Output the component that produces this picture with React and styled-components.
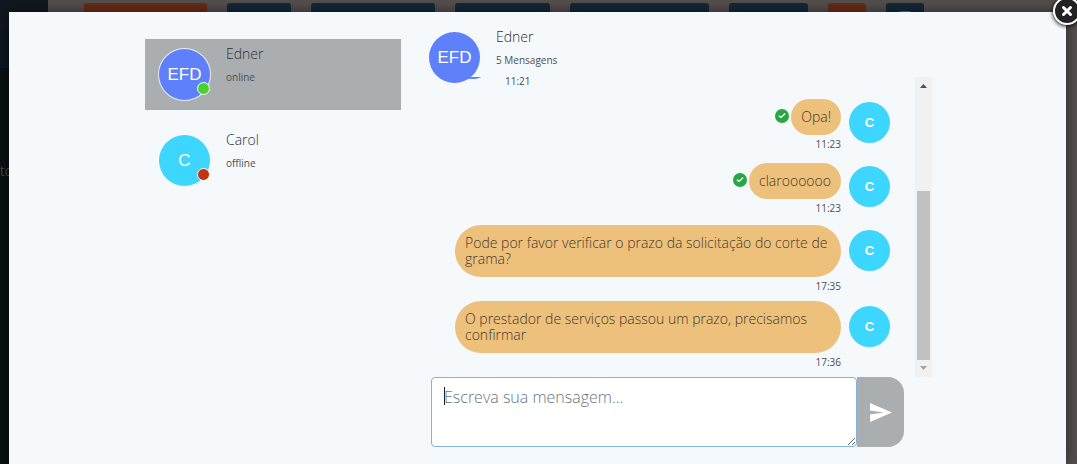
import React from 'react'
import styled, { createGlobalStyle } from 'styled-components'

const GlobalStyle = createGlobalStyle`
  * {
    box-sizing: border-box;
  }

  body {
    margin: 0;
    font-family: "Open Sans", "Noto Sans", sans-serif;
    font-weight: 300;
    color: #2b3035;
  }

  button, textarea {
    font: inherit;
  }
`;

const Page = styled.div`
  position: relative;
  display: flex;
  height: 100vh;
  overflow: hidden;
  background-color: #544e4d;
`;

const Sidebar = styled.aside`
  width: 48px;
  background: linear-gradient(#11181f 28px, #0c1720 28px, #0c1720 68px, #0a1013 68px);
  color: #6a5c5e;
  font-size: 14px;
  line-height: 20px;
  padding-top: 161px;
`;

const Toolbar = styled.div`
  flex: 1;
  display: flex;
  align-items: flex-start;
  gap: 20px;
  padding: 3px 36px;
`;

const ToolButton = styled.button`
  display: flex;
  justify-content: center;
  width: ${props => props.$width}px;
  height: 34px;
  padding: 7px 0;
  border: none;
  border-radius: 3px;
  background-color: ${props => props.$orange ? '#672d17' : '#13283a'};
  color: #5d6468;
`;

const Modal = styled.div`
  position: absolute;
  top: 12px;
  right: 11px;
  bottom: 0;
  left: 9px;
  padding: 14px 20px 0 22px;
  background-color: #f5f9fc;
  box-shadow: 0 0 12px rgba(0, 0, 0, 0.5);
`;

const Close = styled.button`
  position: absolute;
  top: -15px;
  right: -15px;
  width: 28px;
  height: 28px;
  padding: 0;
  border: 2px solid #fff;
  border-radius: 50%;
  background-color: #222;
  box-shadow: 0 1px 4px #000;
  display: flex;
  align-items: center;
  justify-content: center;
`;

const Content = styled.div`
  display: grid;
  grid-template-columns: 256px 1fr;
  gap: 28px;
  max-width: 787px;
  margin: 0 auto;
`;

const Contacts = styled.ul`
  list-style: none;
  margin: 0;
  padding: 13px 0 0;
  display: flex;
  flex-direction: column;
  gap: 15px;
`;

const Contact = styled.li`
  display: flex;
  gap: 16px;
  height: 71px;
  padding: 4px 14px;
  background-color: ${props => props.$active ? '#aaaeb0' : 'transparent'};
`;

const Avatar = styled.div`
  position: relative;
  flex: none;
  display: flex;
  align-items: center;
  justify-content: center;
  width: ${props => props.$small ? 41 : 51}px;
  height: ${props => props.$small ? 41 : 51}px;
  margin-top: ${props => props.$small ? 5 : 6}px;
  border-radius: 50%;
  background-color: ${props => props.$blue ? '#5e80fb' : '#3dd6ff'};
  box-shadow: 0 0 0 1px ${props => props.$ring ? '#e8edfa' : 'transparent'};
  color: #fff;
  font-family: "Liberation Sans", Arial, sans-serif;
  font-size: ${props => props.$small ? 13 : 17}px;
  font-weight: ${props => props.$small ? 700 : 400};
`;

const Status = styled.span`
  position: absolute;
  right: 0;
  bottom: 5px;
  width: 13px;
  height: 13px;
  border: 1px solid #fff;
  border-radius: 50%;
  background-color: ${props => props.$online ? '#4ccf33' : '#bf3413'};
`;

const Name = styled.div`
  font-size: 14px;
  line-height: 22px;
`;

const Detail = styled.div`
  color: #4a4f54;
  font-size: 10px;
  line-height: 24px;
  font-weight: 400;
`;

const Header = styled.header`
  position: relative;
  z-index: 1;
  display: flex;
  gap: 16px;
  height: 51px;
`;

const History = styled.div`
  display: flex;
  height: 300px;
`;

const Messages = styled.div`
  flex: 1;
  display: flex;
  flex-direction: column;
  justify-content: flex-end;
  overflow: hidden;
  padding: 0 25px 0 23px;
`;

const Message = styled.div`
  display: flex;
  flex: none;
  flex-direction: ${props => props.$mine ? 'row' : 'row-reverse'};
  justify-content: flex-end;
  gap: 8px;
  min-height: 64px;
  padding-bottom: 6px;
`;

const Body = styled.div`
  max-width: 386px;
`;

const Line = styled.div`
  display: flex;
  align-items: flex-end;
  justify-content: flex-end;
  gap: 2px;
  min-height: 38px;
`;

const Bubble = styled.p`
  margin: 0;
  padding: 10px;
  border-radius: 26px;
  background-color: #edc17c;
  color: #46382a;
  font-size: 14px;
  line-height: 16px;
`;

const Check = styled.svg`
  flex: none;
  width: 14px;
  height: 14px;
  margin-bottom: 12px;
`;

const Time = styled.div`
  padding: ${props => props.$mine ? '0' : '1px 4px 0'};
  color: #4a4f54;
  font-size: 10px;
  line-height: 18px;
  font-weight: 400;
  text-align: right;
`;

const Scrollbar = styled.div`
  display: flex;
  flex-direction: column;
  align-items: center;
  justify-content: space-between;
  width: 17px;
  padding: 7px 2px;
  background-color: #f1f1f1;
`;

const Arrow = styled.svg`
  width: 7px;
  height: 4px;
`;

const Thumb = styled.div`
  width: 13px;
  height: 169px;
  margin: auto 0 6px;
  background-color: #c1c1c1;
`;

const Composer = styled.form`
  position: relative;
  display: flex;
  height: 70px;
  margin: 0 28px 0 2px;

  &::before {
    content: "";
    position: absolute;
    top: 10px;
    left: 13px;
    width: 1px;
    height: 18px;
    background-color: #222;
  }
`;

const Input = styled.textarea`
  flex: 1;
  min-width: 0;
  padding: 7px 12px;
  border: 1px solid #80b4dc;
  border-radius: 4px;
  outline: none;
  background-color: #fff;
  caret-color: transparent;
  font-size: 16px;
  line-height: 24px;
  resize: both;

  &::placeholder {
    color: #6c757d;
    opacity: 1;
  }
`;

const Send = styled.button`
  display: flex;
  align-items: center;
  justify-content: center;
  width: 47px;
  padding: 0;
  border: none;
  border-radius: 0 16px 16px 0;
  background-color: #aaaeb0;
`;

const tools = [
  { width: 123, orange: true },
  { width: 64 },
  { width: 124 },
  { width: 95 },
  { width: 139 },
  { width: 79 },
  { width: 38, orange: true },
  { width: 38, icon: true },
]

const messages = [
  { text: 'Opa!', time: '11:23', read: true },
  { text: 'claroooooo', time: '11:23', read: true },
  { text: 'Pode por favor verificar o prazo da solicitação do corte de grama?', time: '17:35' },
  { text: 'O prestador de serviços passou um prazo, precisamos confirmar', time: '17:36' },
]

const App = () => {
  return (
    <Page>
      <GlobalStyle />
      <Sidebar>to</Sidebar>
      <Toolbar>
        {tools.map((tool, i) => (
          <ToolButton key={i} type="button" $width={tool.width} $orange={tool.orange}>
            {tool.icon && (
              <svg width="14" height="16" viewBox="0 0 14 16" fill="none" stroke="currentColor" strokeWidth="2">
                <rect x="1" y="2" width="12" height="12" rx="2" />
              </svg>
            )}
          </ToolButton>
        ))}
      </Toolbar>
      <Modal role="dialog">
        <Close type="button" aria-label="Fechar">
          <svg width="12" height="12" viewBox="0 0 12 12" stroke="#fff" strokeWidth="3" strokeLinecap="round">
            <path d="M2.5 2.5L9.5 9.5M9.5 2.5L2.5 9.5" />
          </svg>
        </Close>
        <Content>
          <Contacts>
            <Contact $active>
              <Avatar $blue $ring>EFD<Status $online /></Avatar>
              <div>
                <Name>Edner</Name>
                <Detail>online</Detail>
              </div>
            </Contact>
            <Contact>
              <Avatar>C<Status /></Avatar>
              <div>
                <Name>Carol</Name>
                <Detail>offline</Detail>
              </div>
            </Contact>
          </Contacts>
          <section>
            <Header>
              <Avatar $blue>EFD</Avatar>
              <div>
                <Name>Edner</Name>
                <Detail>5 Mensagens</Detail>
              </div>
            </Header>
            <History>
              <Messages>
                <Message>
                  <Body>
                    <Line />
                    <Time>11:21</Time>
                  </Body>
                  <Avatar $small $blue />
                </Message>
                {messages.map((message, i) => (
                  <Message key={i} $mine>
                    <Body>
                      <Line>
                        {message.read && (
                          <Check viewBox="0 0 14 14">
                            <circle cx="7" cy="7" r="7" fill="#28a745" />
                            <path d="M3.8 6.8L6 8.4L10.2 4.6" fill="none" stroke="#fff" strokeWidth="1.3" />
                          </Check>
                        )}
                        <Bubble>{message.text}</Bubble>
                      </Line>
                      <Time $mine>{message.time}</Time>
                    </Body>
                    <Avatar $small>C</Avatar>
                  </Message>
                ))}
              </Messages>
              <Scrollbar>
                <Arrow viewBox="0 0 7 4"><path d="M0 4L3.5 0L7 4Z" fill="#505050" /></Arrow>
                <Thumb />
                <Arrow viewBox="0 0 7 4"><path d="M0 0L3.5 4L7 0Z" fill="#a3a3a3" /></Arrow>
              </Scrollbar>
            </History>
            <Composer>
              <Input aria-label="Mensagem" placeholder="Escreva sua mensagem..." autoFocus />
              <Send type="submit" aria-label="Enviar">
                <svg width="22" height="19" viewBox="0 0 22 19" fill="#fff">
                  <path d="M0 0L22 9.5L0 19V11.5L14 9.5L0 7.5Z" />
                </svg>
              </Send>
            </Composer>
          </section>
        </Content>
      </Modal>
    </Page>
  )
}

export default App
